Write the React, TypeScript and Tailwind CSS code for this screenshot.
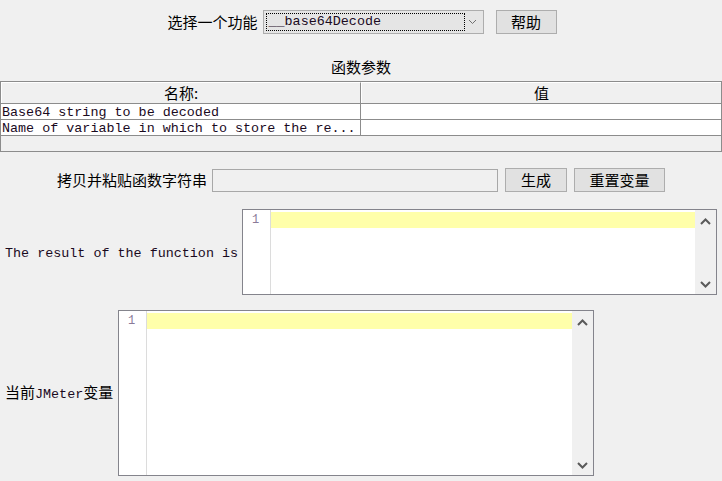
import React from "react";

const mono = { fontFamily: '"Liberation Mono", "DejaVu Sans Mono", monospace' };
const cjk = { fontFamily: '"Noto Sans CJK SC", "Noto Sans", sans-serif' };

function Chevron({ up }: { up?: boolean }) {
  return (
    <svg width="11" height="7" viewBox="0 0 11 7">
      <path
        d={up ? "M1 6 L5.5 1.5 L10 6" : "M1 1 L5.5 5.5 L10 1"}
        fill="none"
        stroke="#5a5a5a"
        strokeWidth="2"
      />
    </svg>
  );
}

function Editor({ w, h }: { w: string; h: string }) {
  return (
    <div className={`flex border border-[#84848c] bg-white ${w} ${h}`}>
      <div className="w-[28px] shrink-0 border-r border-[#dcdcdc] pt-[3px] pl-[9px] leading-[14px]">
        <span className="block text-[12px] leading-[14px] text-[#8a7a98]" style={mono}>
          1
        </span>
      </div>
      <div className="flex-1 pt-[2px]">
        <div className="h-[16px] bg-[#ffffaa]" />
      </div>
      <div className="flex w-[21px] shrink-0 flex-col items-center justify-between bg-[#f0f0f0] pt-[8px] pb-[6px]">
        <Chevron up />
        <Chevron />
      </div>
    </div>
  );
}

export default function App() {
  return (
    <div className="h-[481px] w-[722px] overflow-hidden bg-[#f0f0f0] text-[#1a0a1e]">
      {/* top row */}
      <div className="flex items-center justify-center pt-[10px] pl-[2px]">
        <span className="text-[15px] leading-[24px] text-black" style={cjk}>
          选择一个功能
        </span>
        <div className="ml-[5px] flex h-[24px] w-[221px] items-center border border-[#adadad] bg-[#e5e5e5] pl-[2px]">
          <div
            className="flex h-[18px] w-[199px] items-center border border-dotted border-black pl-[2px] text-[13.4px] leading-[16px]"
            style={mono}
          >
            __base64Decode
          </div>
          <div className="flex flex-1 items-center justify-center pr-[2px]">
            <svg width="9" height="6" viewBox="0 0 9 6">
              <path d="M1 1 L4.5 4.5 L8 1" fill="none" stroke="#707070" strokeWidth="1" />
            </svg>
          </div>
        </div>
        <button
          className="ml-[12px] h-[24px] w-[61px] border border-[#adadad] bg-[#e1e1e1] text-[15px] leading-[20px] text-black"
          style={cjk}
        >
          帮助
        </button>
      </div>

      {/* title */}
      <div className="mt-[23px] text-center text-[15px] leading-[20px] text-black" style={cjk}>
        函数参数
      </div>

      {/* table */}
      <div className="mt-[4px] h-[71px] border border-[#8c8c8c] bg-[#f0f0f0]">
        <div className="grid h-[22px] grid-cols-[360px_1fr] border-b border-[#8c8c8c]">
          <div
            className="border-t border-l border-white border-r-[#8c8c8c] border-r text-center text-[15px] leading-[20px] text-black"
            style={cjk}
          >
            名称:
          </div>
          <div
            className="border-t border-l border-white text-center text-[15px] leading-[20px] text-black"
            style={cjk}
          >
            值
          </div>
        </div>
        <div className="grid grid-cols-[360px_1fr] bg-white text-[13.4px] leading-[17px]" style={mono}>
          <div className="h-[16px] overflow-hidden whitespace-nowrap border-r border-b border-[#8c8c8c] pl-[1px]">
            Base64 string to be decoded
          </div>
          <div className="h-[16px] border-b border-[#8c8c8c]" />
          <div className="h-[16px] overflow-hidden whitespace-nowrap border-r border-b border-[#8c8c8c] pl-[1px]">
            Name of variable in which to store the re...
          </div>
          <div className="h-[16px] border-b border-[#8c8c8c]" />
        </div>
      </div>

      {/* copy row */}
      <div className="mt-[16px] flex items-center justify-center">
        <span className="text-[15px] leading-[24px] text-black" style={cjk}>
          拷贝并粘贴函数字符串
        </span>
        <div className="ml-[5px] h-[23px] w-[286px] border border-[#a8a8a8] bg-[#f0f0f0]" />
        <button
          className="ml-[7px] h-[24px] w-[62px] border border-[#adadad] bg-[#e1e1e1] text-[15px] leading-[20px] text-black"
          style={cjk}
        >
          生成
        </button>
        <button
          className="ml-[7px] h-[24px] w-[91px] border border-[#adadad] bg-[#e1e1e1] text-[15px] leading-[20px] text-black"
          style={cjk}
        >
          重置变量
        </button>
      </div>

      {/* result */}
      <div className="mt-[17px] flex items-center pl-[5px]">
        <span className="w-[237px] whitespace-nowrap pt-[3px] text-[13.4px] leading-[16px]" style={mono}>
          The result of the function is
        </span>
        <Editor w="w-[475px]" h="h-[86px]" />
      </div>

      {/* variables */}
      <div className="mt-[15px] flex items-center pl-[5px]">
        <span className="w-[113px] whitespace-nowrap text-[15px] leading-[20px] text-black" style={cjk}>
          当前<span className="text-[13.4px] text-[#1a0a1e]" style={mono}>JMeter</span>变量
        </span>
        <Editor w="w-[476px]" h="h-[166px]" />
      </div>
    </div>
  );
}
